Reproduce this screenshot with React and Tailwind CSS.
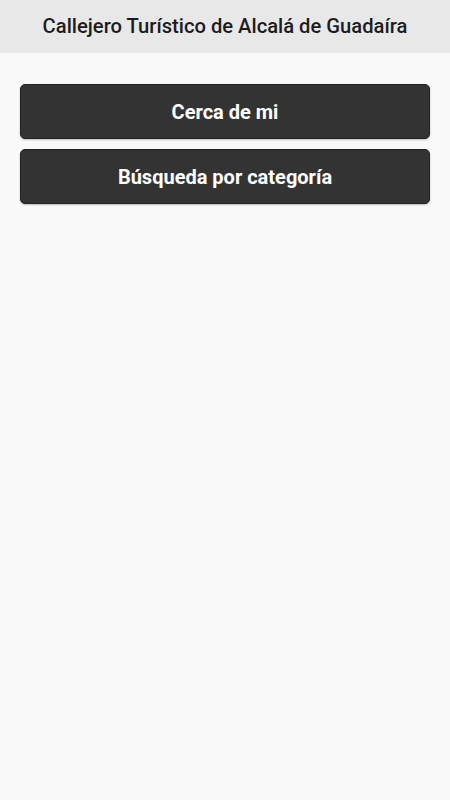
import React from "react";

const buttons = ["Cerca de mi", "Búsqueda por categoría"];

const App = () => {
  return (
    <div className="min-h-[800px] bg-[#f9f9f9] font-['Roboto',sans-serif]">
      <header className="h-[53px] bg-[#e8e8e8] flex items-center justify-center">
        <h1 className="text-[20.2px] font-medium text-[#1c1c1c]">
          Callejero Turístico de Alcalá de Guadaíra
        </h1>
      </header>
      <div className="px-5 pt-[31px] flex flex-col gap-[10px]">
        {buttons.map((label) => (
          <button
            key={label}
            className="h-[55px] w-full rounded-[5px] bg-[#333333] border border-[#222] shadow-[0_1px_2px_rgba(0,0,0,0.25)] text-white text-[20px] font-bold"
          >
            {label}
          </button>
        ))}
      </div>
    </div>
  );
};

export default App;
